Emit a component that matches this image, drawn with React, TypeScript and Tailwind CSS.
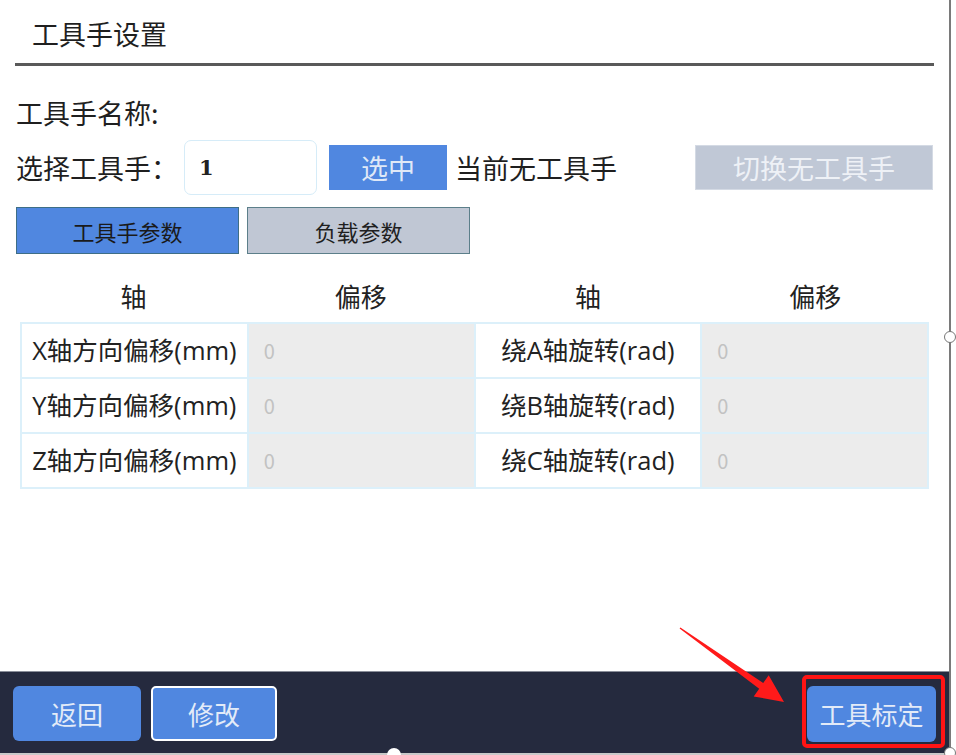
import React from "react";

const rowsLeft = ["X轴方向偏移(mm)", "Y轴方向偏移(mm)", "Z轴方向偏移(mm)"];
const rowsRight = ["绕A轴旋转(rad)", "绕B轴旋转(rad)", "绕C轴旋转(rad)"];

function LabelCell({ text }: { text: string }) {
  return (
    <div className="flex h-[55px] items-center justify-center border-r-2 border-b-2 border-[#dcf0fa] bg-white font-['Open_Sans','Noto_Sans_CJK_SC',sans-serif] text-[25.5px] leading-none text-[#222]">
      {text}
    </div>
  );
}

function ValueCell() {
  return (
    <div className="flex h-[55px] items-center border-r-2 border-b-2 border-[#dcf0fa] bg-[#ececec] pl-[15px] text-[20px] leading-none text-[#c2c2c2]">
      0
    </div>
  );
}

export default function App() {
  return (
    <div className="relative flex h-[755px] w-[956px] overflow-hidden bg-white font-['Noto_Sans_CJK_SC',sans-serif] text-[#1f1f1f]">
      <div className="flex w-[951px] flex-col border-r-2 border-[#7a7a7a]">
        <div className="flex flex-1 flex-col px-[15px]">
          <div className="flex h-[63px] items-center pl-[17px] pt-[3px] text-[27px] leading-none">工具手设置</div>
          <div className="h-[3px] bg-[#595959]" />

          <div className="mt-[22px] flex h-[48px] items-center pl-[1px] text-[27px] leading-none">工具手名称:</div>

          <div className="mt-[4px] flex h-[55px] items-center">
            <div className="w-[169px] pl-[1px] text-[27px] leading-none">选择工具手：</div>
            <div className="flex h-[55px] w-[133px] items-center rounded-[7px] border-[1.5px] border-[#d6ecf8] pl-[14px] font-['DejaVu_Serif',serif] text-[21px] font-semibold text-[#222]">
              1
            </div>
            <div className="ml-[12px] flex h-[45px] w-[118px] items-center justify-center bg-[#5087e0] text-[27px] leading-none text-[#dfe8f7]">
              选中
            </div>
            <div className="ml-[8px] text-[27px] leading-none">当前无工具手</div>
            <div className="ml-auto mr-px flex h-[45px] w-[238px] items-center justify-center border border-[#d4dae4] bg-[#c0c8d6] text-[27px] leading-none text-[#eef1f6]">
              切换无工具手
            </div>
          </div>

          <div className="mt-[12px] flex h-[47px] gap-[8px] pl-[1px]">
            <div className="flex w-[223px] items-center justify-center border-[1.5px] border-[#3e6e86] bg-[#5087e0] text-[22px] leading-none text-[#1a1a1a]">
              工具手参数
            </div>
            <div className="flex w-[223px] items-center justify-center border-[1.5px] border-[#5c7f8a] bg-[#c0c7d4] text-[22px] leading-none text-[#1f1f1f]">
              负载参数
            </div>
          </div>

          <div className="mx-[5px] mt-[22px] grid h-[40px] grid-cols-4 items-center text-[26px] leading-none text-[#222]">
            <div className="text-center">轴</div>
            <div className="text-center">偏移</div>
            <div className="text-center">轴</div>
            <div className="text-center">偏移</div>
          </div>

          <div className="mx-[5px] mt-[6px] grid grid-cols-4 border-l-2 border-t-2 border-[#dcf0fa]">
            {rowsLeft.map((l, i) => (
              <React.Fragment key={l}>
                <LabelCell text={l} />
                <ValueCell />
                <LabelCell text={rowsRight[i]} />
                <ValueCell />
              </React.Fragment>
            ))}
          </div>
        </div>

        <div className="flex h-[84px] items-start border-t border-[#8a8e99] bg-[#252a3e] pt-[14px]">
          <div className="ml-[13px] flex h-[55px] w-[128px] items-center justify-center rounded-[6px] bg-[#5087e0] text-[26px] leading-none text-[#e3ebf8]">
            返回
          </div>
          <div className="ml-[10px] flex h-[55px] w-[126px] items-center justify-center rounded-[5px] border-2 border-white bg-[#5087e0] text-[26px] leading-none text-[#e3ebf8]">
            修改
          </div>
          <div className="ml-auto mr-[13px] flex h-[56px] w-[129px] items-center justify-center rounded-[6px] bg-[#5087e0] text-[26px] leading-none text-[#e3ebf8]">
            工具标定
          </div>
        </div>
      </div>

      {/* bottom edge */}
      <div className="absolute bottom-0 left-0 h-[2px] w-[951px] bg-[#c8c8c8]" />
      <div className="absolute bottom-[-7px] left-[387px] h-[14px] w-[14px] rounded-full bg-white" />

      {/* handle on right edge */}
      <div className="absolute left-[944px] top-[331px] h-[12px] w-[12px] rounded-full border border-[#777] bg-white" />
      <div className="absolute left-[944px] top-[747px] h-[12px] w-[12px] rounded-full border border-[#777] bg-white" />

      {/* red annotation box */}
      <div className="absolute left-[802px] top-[675px] h-[73px] w-[143px] rounded-[5px] border-4 border-[#ff1414]" />

      {/* red arrow */}
      <svg className="absolute left-0 top-0" width="956" height="755" viewBox="0 0 956 755">
        <polygon
          points="680.4,627.5 763.2,682.9 768.7,675.2 784,702 753.7,696.4 759.2,688.7 679.6,628.5"
          fill="#ff1a1a"
        />
      </svg>
    </div>
  );
}
